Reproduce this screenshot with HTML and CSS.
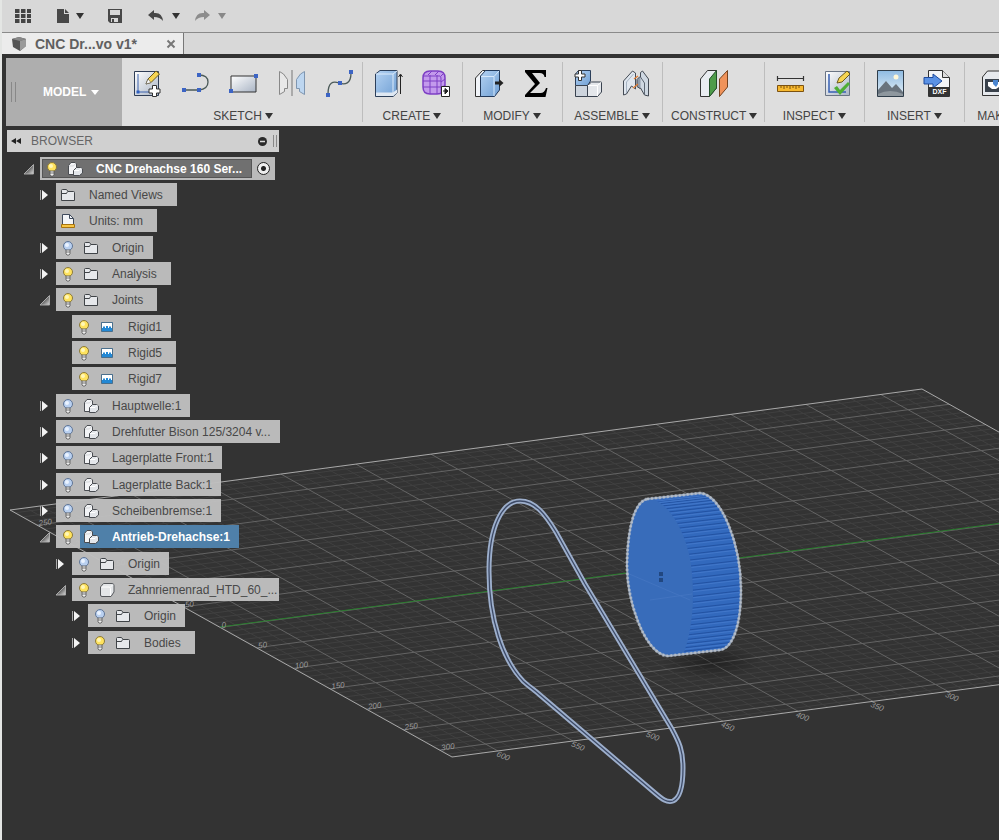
FILE: index.html
```html
<!DOCTYPE html>
<html lang="en">
<head>
<meta charset="utf-8">
<title>CNC Drehachse</title>
<link rel="stylesheet" href="styles.css">
</head>
<body>
<svg class="defs" aria-hidden="true">
  <defs>
    <linearGradient id="g-steel" x1="0" y1="0" x2="1" y2="1"><stop offset="0" stop-color="#fff"/><stop offset="1" stop-color="#a9b4c4"/></linearGradient>
    <linearGradient id="g-blue" x1="0" y1="0" x2="1" y2="1"><stop offset="0" stop-color="#b4d2f2"/><stop offset="1" stop-color="#6f9fd4"/></linearGradient>
    <linearGradient id="g-sky" x1="0" y1="0" x2="0" y2="1"><stop offset="0" stop-color="#8fbbe2"/><stop offset="1" stop-color="#e6f1f8"/></linearGradient>
    <linearGradient id="g-tri" x1="0" y1="0" x2="1" y2="1"><stop offset=".3" stop-color="#333"/><stop offset="1" stop-color="#ddd"/></linearGradient>
  </defs>
  <symbol id="bulb-on" viewBox="0 0 16 16"><circle cx="8" cy="6" r="4.500" fill="#ffe35e" stroke="#8c7a3a"/><circle cx="7" cy="5" r="2" fill="#fff7b8"/><path d="M6 10h4v4l-1 1H7l-1-1z" fill="#eee" stroke="#555" stroke-width=".8"/><path d="M6 12h4" stroke="#555" stroke-width=".8"/></symbol>
  <symbol id="bulb-off" viewBox="0 0 16 16"><circle cx="8" cy="6" r="4.500" fill="#b9d0f0" stroke="#5f7596"/><circle cx="7" cy="5" r="2" fill="#eaf3ff"/><path d="M6 10h4v4l-1 1H7l-1-1z" fill="#eee" stroke="#555" stroke-width=".8"/><path d="M6 12h4" stroke="#555" stroke-width=".8"/></symbol>
  <symbol id="folder" viewBox="0 0 16 16"><path d="M1.500 13.500V3.500q0-1 1-1h4l1.500 2h5.500q1 0 1 1v8z" fill="#e6e8eb" stroke="#3f4347"/><path d="M2 6.500h4.500l1-2" fill="none" stroke="#3f4347"/></symbol>
  <symbol id="component" viewBox="0 0 16 16"><path d="M1.500 13.500V4.500L4 1.500h4L9.500 3v10.500z" fill="#f3f4f6" stroke="#4a4d52"/><path d="M2 5h4.500L8.500 2.500" fill="none" stroke="#c4c7cb" stroke-width=".7"/><path d="M6.500 14.500V9.500L9.500 6.500h4L15.500 8v4L12.500 14.500z" fill="#e3e6ea" stroke="#4a4d52"/><path d="M7 9.500h5l2.500-2.500" fill="none" stroke="#fff"/></symbol>
  <symbol id="body" viewBox="0 0 16 16"><path d="M1.500 13V5L4.500 1.500H13q2 0 2 2V10l-3 4.500H3q-1.500 0-1.500-1.500z" fill="#e4e6e8" stroke="#55585c"/><path d="M2.500 5H10q1.500 0 1.500 1.500V14M11.500 5L14 2.500" fill="none" stroke="#fff"/></symbol>
  <symbol id="units" viewBox="0 0 16 16"><path d="M2.500 12V1.500h7l4 4V12z" fill="#f3f5f8" stroke="#3f4a5c"/><path d="M9.500 1.500v4h4" fill="none" stroke="#3f4a5c"/><path d="M1.500 11.500h13v3h-13z" fill="#f7c544" stroke="#a87410"/></symbol>
  <symbol id="rigid" viewBox="0 0 16 16"><path d="M2.500 3.500h11v9h-11z" fill="#2388d4" stroke="#4a6f8c"/><path d="M3 4h10v5h-1V7.500h-2V9H9V7H7v2H6V7.500H4V9H3z" fill="#fff"/></symbol>
  <symbol id="closed" viewBox="0 0 16 16"><path d="M4.500 3v10" stroke="#aaa" stroke-width="1"/><path d="M6 3l6 5-6 5z" fill="#f4f4f4"/></symbol>
  <symbol id="open" viewBox="0 0 16 16"><path d="M13.500 3.500v9.500H4z" fill="url(#g-tri)" stroke="#aaa"/></symbol>
</svg>

<header class="quick">
  <button aria-label="Data panel"><svg width="16" height="16" viewBox="0 0 16 16"><path fill="#444" d="M0 1h4.500v4H0zM6 1h4.500v4H6zM12 1h4v4h-4zM0 6h4.500v4H0zM6 6h4.500v4H6zM12 6h4v4h-4zM0 11h4.500v4H0zM6 11h4.500v4H6zM12 11h4v4h-4z"/></svg></button>
  <button class="with-arrow file" aria-label="File"><svg width="14" height="16" viewBox="0 0 14 16"><path fill="#484848" d="M1 1h7v5h5v9H1zM9 1l4 4H9z"/></svg><i class="down"></i></button>
  <button class="save" aria-label="Save"><svg width="16" height="16" viewBox="0 0 16 16"><path fill="#484848" fill-rule="evenodd" d="M1 1h14v14H3l-2-2zM3 2v5h10V2zM4 10v4h7v-4z"/><path fill="#484848" d="M5 11h2v3H5z"/></svg></button>
  <button class="with-arrow undo" aria-label="Undo"><svg width="16" height="12" viewBox="0 0 16 12"><path fill="#484848" d="M0 5l6-5v3q8-1 9 8-3-4-9-4v3z"/></svg><i class="down"></i></button>
  <button class="with-arrow redo" aria-label="Redo"><svg width="16" height="12" viewBox="0 0 16 12"><path fill="#8c8c8c" d="M16 5l-6-5v3Q2 2 1 11q3-4 9-4v3z"/></svg><i class="down"></i></button>
</header>

<nav class="tabs">
  <div class="tab">
    <svg width="16" height="14" viewBox="0 0 16 14"><path d="M1 2l7-2 7 2v7l-6 5-7-4z" fill="#555"/><path d="M1 2l7-2 7 2-6 2z" fill="#888"/><path d="M9 4l6-2v7l-6 5z" fill="#9a9a9a"/></svg>
    <span>CNC Dr...vo v1*</span>
    <button aria-label="Close tab"><svg width="10" height="10" viewBox="0 0 10 10"><path d="M1.500 1.500l7 7M8.500 1.500l-7 7" stroke="#777" stroke-width="2"/></svg></button>
  </div>
</nav>

<div class="ribbon">
  <button class="workspace"><span class="grip"></span><span>MODEL</span><i class="down"></i></button>

  <section class="group">
    <div class="tools">
      <button aria-label="Create sketch"><svg class="ico" viewBox="0 0 32 32"><path d="M3.500 3.500h24v24h-24z" fill="url(#g-steel)" stroke="#2f3d55"/><path d="M7 6v18h14" fill="none" stroke="#3d62ad"/><path d="M5.500 22.500h3v3h-3z" fill="#2f5fc0"/><path d="M15 16l2-5L25 3l3.500 3-8.500 8.500z" fill="#f6d451" stroke="#6b5a1e"/><path d="M15 16l2-5 3 3.500z" fill="#fff" stroke="#555" stroke-width=".6"/><path d="M21.500 17.500h4v3.500H29v4h-3.500v3.500h-4V25H18v-4h3.500z" fill="#fff" stroke="#333"/></svg></button>
      <button aria-label="Line"><svg class="ico" viewBox="0 0 32 32"><path d="M5 22h15q9-1 9-8t-9-7" fill="none" stroke="#4b5a58" stroke-width="1.300"/><path d="M3 20h4v4H3zM18 20h4v4h-4zM18 5h4v4h-4z" fill="#3c64c4"/></svg></button>
      <button aria-label="Rectangle"><svg class="ico" viewBox="0 0 32 32"><path d="M4 8h25v16H4z" fill="url(#g-steel)" stroke="#333"/><path d="M2 21h4v4H2zM27 6h4v4h-4z" fill="#3c64c4"/></svg></button>
      <button aria-label="Mirror"><svg class="ico" viewBox="0 0 32 32"><path d="M4.500 26.500v-23q4 1 8 8v9h-3v3z" fill="#e8e8e8" stroke="#888"/><path d="M17 2v26" stroke="#777"/><path d="M29.500 26.500v-23q-4 1-8 8v9h3v3z" fill="#bdd6f0" stroke="#7f96b0"/></svg></button>
      <button aria-label="Spline"><svg class="ico" viewBox="0 0 32 32"><path d="M5 26c0-12 5-13 11-11s12 1 12-10" fill="none" stroke="#4b5a58" stroke-width="1.300"/><path d="M3 25h4v4H3zM15 13h4v4h-4zM26 2h4v4h-4z" fill="#3c64c4"/></svg></button>
    </div>
    <button class="menu">SKETCH<i class="down"></i></button>
  </section>

  <section class="group">
    <div class="tools">
      <button aria-label="Extrude"><svg class="ico" viewBox="0 0 32 32"><path d="M3.500 6L8 2.500h17V25l-4 3.500H3.500z" fill="url(#g-blue)" stroke="#2c3f5a"/><path d="M4 6h17v22M21 6l4-3" fill="none" stroke="#dcebfb"/><path d="M4 24.500h17l4-3V25l-4 3H4z" fill="#dfe8f2"/><path d="M28.500 26V7M26.500 9l2-3 2 3" fill="none" stroke="#222"/></svg></button>
      <button aria-label="Create form"><svg class="ico" viewBox="0 0 32 32"><path d="M3 10q0-7 7-7h8q7 0 7 7v8q0 8-8 8h-7q-7 0-7-7z" fill="#c39aec" stroke="#7d3fc4" stroke-width="1.500"/><path d="M10 7v19M17 7v19M3 13h18M3 19h18M4 8h16q1 0 1 3v14M21 8l3-3M21 14l4-3M21 20l4-3M8 7l4-4M15 7l4-4" fill="none" stroke="#7d3fc4"/><path d="M21.500 18.500h8v10h-8z" fill="#fff" stroke="#222"/><path d="M23 23h4M25 20.500l3 2.500-3 3z" fill="#222" stroke="#222"/></svg></button>
    </div>
    <button class="menu">CREATE<i class="down"></i></button>
  </section>

  <section class="group">
    <div class="tools">
      <button aria-label="Press pull"><svg class="ico" viewBox="0 0 32 32"><path d="M3.500 10l7-7.500h5L9 10v18.500H3.500z" fill="#f1f4f8" stroke="#333"/><path d="M8.500 8l5-5.500h14V22l-5 6.500h-14z" fill="url(#g-blue)" stroke="#22395a"/><path d="M9 8.500h13V28M22 8.500L27 3" fill="none" stroke="#d6e8fb"/><path d="M23 13.500h4V11l4.500 4-4.500 4v-2.500h-4z" fill="#222"/></svg></button>
      <button aria-label="Change parameters"><svg class="ico" viewBox="0 0 32 32"><path d="M5 2h21v7h-1.500q-.5-4-5-4H12l8 10-10 10h10.500q4 0 5.500-5h1.500l-2 9H5v-2l10-11L5 4z" fill="#000"/></svg></button>
    </div>
    <button class="menu">MODIFY<i class="down"></i></button>
  </section>

  <section class="group">
    <div class="tools">
      <button aria-label="New component"><svg class="ico" viewBox="0 0 32 32"><path d="M3.500 6l3-3.500h12V13l-3 4.500h-12z" fill="url(#g-blue)" stroke="#2c3f5a"/><path d="M3.500 17.500h12v11h-12z" fill="#cdd4dd" stroke="#39424f"/><path d="M15.500 17.500l4-3.500h10v10l-4 4.500h-10z" fill="#e4e7eb" stroke="#39424f"/><path d="M16 17.500h9.500V28M25.500 17.500l4-3.500" fill="none" stroke="#fff"/><path d="M6.500 2.500h3v3.500H13v3H9.500v3.500h-3V9H3V6h3.500z" fill="#fff" stroke="#333"/></svg></button>
      <button aria-label="Joint"><svg class="ico" viewBox="0 0 32 32"><path d="M3.500 13l9-10 3 2v16l-4-3-5 8-3 1z" fill="#dfe6ee" stroke="#444b55"/><path d="M6.500 25V14l7-8" fill="none" stroke="#a6b3c2"/><path d="M17 11.500l3-3 3 2v8l-3 2-3-2z" fill="#8f9baa" stroke="#444b55"/><path d="M20.500 9V4.500l2-1.500 6 8v17l-4-1-4-7" fill="#cfd8e2" stroke="#444b55"/><path d="M24.500 27V15l-4-6" fill="none" stroke="#5d6773"/><path d="M13 20l5-4M14 11l4-3" stroke="#e07a30" stroke-width="1.200"/></svg></button>
    </div>
    <button class="menu">ASSEMBLE<i class="down"></i></button>
  </section>

  <section class="group solo">
    <div class="tools">
      <button aria-label="Offset plane"><svg class="ico" viewBox="0 0 32 32"><path d="M2.500 11l7-8.500h9V20l-7 8.500h-9z" fill="#e9edf1" stroke="#333"/><path d="M11.500 11l7-8.500V20l-7 8.500z" fill="#4e9c4a" stroke="#23502a"/><path d="M21.500 11l8-8.500V19l-8 9.500z" fill="#f0935a" stroke="#74421f"/></svg></button>
    </div>
    <button class="menu">CONSTRUCT<i class="down"></i></button>
  </section>

  <section class="group">
    <div class="tools">
      <button aria-label="Measure"><svg class="ico" viewBox="0 0 32 32"><path d="M3.500 8v5M29.500 8v5M4 10.500h25" stroke="#333" stroke-width="1.200"/><path d="M3.500 17.500h26v6h-26z" fill="#f7b92f" stroke="#7d5210"/><path d="M7 18v2M10 18v3M13 18v2M16 18v3M19 18v2M22 18v3M25 18v2" stroke="#7d5210"/></svg></button>
      <button aria-label="Analysis"><svg class="ico" viewBox="0 0 32 32"><path d="M3.500 3.500h24v24h-24z" fill="url(#g-steel)" stroke="#6a7484"/><path d="M7 6v18h17" fill="none" stroke="#3760b4" stroke-width="1.500"/><path d="M15 15l2-5 8-7 3 3-8 8z" fill="#f6d451" stroke="#6b5a1e"/><path d="M12 20l3-2 3 4 8-8 2 2-10 11z" fill="#4fae35"/></svg></button>
    </div>
    <button class="menu">INSPECT<i class="down"></i></button>
  </section>

  <section class="group">
    <div class="tools">
      <button aria-label="Attached canvas"><svg class="ico" viewBox="0 0 32 32"><path d="M3.500 2.500h26v26h-26z" fill="url(#g-sky)" stroke="#2f3d4a"/><circle cx="22" cy="9" r="2.500" fill="#fff8d8"/><path d="M4 22l8-9 6 7 4-4 7 8v4H4z" fill="#69737d"/><path d="M4 26q12-6 25 0v2H4z" fill="#8e979e"/></svg></button>
      <button aria-label="Insert DXF"><svg class="ico" viewBox="0 0 32 32"><path d="M6.500 2.500h14l7 7v19h-21z" fill="#f4f5f7" stroke="#333"/><path d="M20.500 2.500v7h7" fill="#ddd" stroke="#333"/><path d="M2 9.500h9V6l9 7-9 7v-4H2z" fill="#5b92e5" stroke="#1f4a9c"/><path d="M7 19h21v9H7z" fill="#333"/><text x="17.500" y="26" text-anchor="middle" class="dxf">DXF</text></svg></button>
    </div>
    <button class="menu">INSERT<i class="down"></i></button>
  </section>

  <section class="group make">
    <div class="tools">
      <button aria-label="3D print"><svg class="ico" viewBox="0 0 32 32"><path d="M8.500 27.500V9l5-6h18v24.500z" fill="#e6e9ed" stroke="#333"/><path d="M11 11h21v13H11z" fill="#3a424c"/><path d="M14 14h18v8h-4l-3-3-3 2h-4l-4-3z" fill="#fff"/><path d="M19 12h5v4l-2 3-3-3z" fill="#4b86d0"/></svg></button>
    </div>
    <button class="menu">MAKE<i class="down"></i></button>
  </section>
</div>

<main class="viewport">
  <svg class="scene" viewBox="2 126 997 714" preserveAspectRatio="xMinYMin slice" role="img" aria-label="Model view">
    <defs>
      <clipPath id="pulley-clip"><path d="M647 499L700 493C722 495 741 545 741 590C741 625 733 648 720 650L668 656C645 655 626 600 627 562C628 525 635 502 647 499Z"/></clipPath>
      <radialGradient id="shade"><stop offset="0" stop-color="#000" stop-opacity=".35"/><stop offset="1" stop-color="#000" stop-opacity="0"/></radialGradient>
    </defs>
    <path id="grid-minor" class="minor"/>
    <path id="grid-major" class="major"/>
    <path d="M10 510L922 389L1390 651M10 510L452 757L1390 633" class="border"/>
    <path d="M220 627L1100 510" class="axis"/>
    <g id="labels" class="labels"></g>
    <ellipse cx="712" cy="662" rx="50" ry="17" fill="url(#shade)"/>
    <g clip-path="url(#pulley-clip)">
      <path d="M620 485h130v180H620z" fill="#3269bd"/>
      <path id="teeth-dark" stroke="#2353a3"/>
      <path id="teeth-light" stroke="#4277c9"/>
      <path d="M645 498C668 498 684 530 690 558C697 600 691 636 682 658H660L620 620V490Z" fill="#386cba"/>
      <path d="M627 573L690 600M650 600L692 594" stroke="#4c7cc6" opacity=".5"/>
      <path d="M659 572h4v4h-4zM659 578h4v4h-4z" fill="#214780"/>
    </g>
    <path d="M647 499L700 493C722 495 741 545 741 590C741 625 733 648 720 650L668 656C645 655 626 600 627 562C628 525 635 502 647 499Z" class="rim"/>
    <path d="M647 499L700 493C722 495 741 545 741 590C741 625 733 648 720 650L668 656C645 655 626 600 627 562C628 525 635 502 647 499Z" class="rim-teeth"/>
    <g fill="none">
      <path d="M520 501C503 501 489 525 489 571C489 620 503 660 523 681C527 685 533 689 540 695L655 793C662 799 667 803 673 801C680 798 683 785 683 768C683 750 679 742 672 729L585 584L556 532C545 514 535 501 520 501Z" stroke="#9dafcc" stroke-width="5"/>
      <path d="M520 501C503 501 489 525 489 571C489 620 503 660 523 681C527 685 533 689 540 695L655 793C662 799 667 803 673 801C680 798 683 785 683 768C683 750 679 742 672 729L585 584L556 532C545 514 535 501 520 501Z" stroke="#3d4a66" stroke-width="1.300"/>
    </g>
  </svg>

  <aside class="browser">
    <div class="browser-head">
      <button aria-label="Collapse"><svg width="10" height="8" viewBox="0 0 10 8"><path d="M5 1v6L0 4zM10 1v6L5 4z" fill="#222"/></svg></button>
      <span>BROWSER</span>
      <button class="minus" aria-label="Minimize"><svg width="9" height="9" viewBox="0 0 9 9"><circle cx="4.500" cy="4.500" r="4.500" fill="#2b2b2b"/><path d="M2 4.500h5" stroke="#ddd" stroke-width="1.500"/></svg></button>
      <span class="grip small"></span>
    </div>
    <ul class="tree">
      <li class="l0"><button class="tog" aria-label="Collapse"><svg><use href="#open"/></svg></button><div class="bar root"><span class="inner"><svg><use href="#bulb-on"/></svg><svg><use href="#component"/></svg><b>CNC Drehachse 160 Ser...</b></span><input type="radio" checked aria-label="Activate component"></div></li>
      <li class="l1"><button class="tog" aria-label="Expand"><svg><use href="#closed"/></svg></button><div class="bar wide"><svg><use href="#folder"/></svg><span>Named Views</span></div></li>
      <li class="l1"><span class="tog"></span><div class="bar wide"><svg><use href="#units"/></svg><span>Units: mm</span></div></li>
      <li class="l1"><button class="tog" aria-label="Expand"><svg><use href="#closed"/></svg></button><div class="bar"><svg><use href="#bulb-off"/></svg><svg><use href="#folder"/></svg><span>Origin</span></div></li>
      <li class="l1"><button class="tog" aria-label="Expand"><svg><use href="#closed"/></svg></button><div class="bar wide"><svg><use href="#bulb-on"/></svg><svg><use href="#folder"/></svg><span>Analysis</span></div></li>
      <li class="l1"><button class="tog" aria-label="Collapse"><svg><use href="#open"/></svg></button><div class="bar wide"><svg><use href="#bulb-on"/></svg><svg><use href="#folder"/></svg><span>Joints</span></div></li>
      <li class="l2"><span class="tog"></span><div class="bar"><svg><use href="#bulb-on"/></svg><svg><use href="#rigid"/></svg><span>Rigid1</span></div></li>
      <li class="l2"><span class="tog"></span><div class="bar wide"><svg><use href="#bulb-on"/></svg><svg><use href="#rigid"/></svg><span>Rigid5</span></div></li>
      <li class="l2"><span class="tog"></span><div class="bar wide"><svg><use href="#bulb-on"/></svg><svg><use href="#rigid"/></svg><span>Rigid7</span></div></li>
      <li class="l1"><button class="tog" aria-label="Expand"><svg><use href="#closed"/></svg></button><div class="bar"><svg><use href="#bulb-off"/></svg><svg><use href="#component"/></svg><span>Hauptwelle:1</span></div></li>
      <li class="l1"><button class="tog" aria-label="Expand"><svg><use href="#closed"/></svg></button><div class="bar"><svg><use href="#bulb-off"/></svg><svg><use href="#component"/></svg><span>Drehfutter Bison 125/3204 v...</span></div></li>
      <li class="l1"><button class="tog" aria-label="Expand"><svg><use href="#closed"/></svg></button><div class="bar"><svg><use href="#bulb-off"/></svg><svg><use href="#component"/></svg><span>Lagerplatte Front:1</span></div></li>
      <li class="l1"><button class="tog" aria-label="Expand"><svg><use href="#closed"/></svg></button><div class="bar"><svg><use href="#bulb-off"/></svg><svg><use href="#component"/></svg><span>Lagerplatte Back:1</span></div></li>
      <li class="l1"><button class="tog" aria-label="Expand"><svg><use href="#closed"/></svg></button><div class="bar"><svg><use href="#bulb-off"/></svg><svg><use href="#component"/></svg><span>Scheibenbremse:1</span></div></li>
      <li class="l1"><button class="tog" aria-label="Collapse"><svg><use href="#open"/></svg></button><div class="bar picked"><svg><use href="#bulb-on"/></svg><span class="hit"><svg><use href="#component"/></svg><b>Antrieb-Drehachse:1</b></span></div></li>
      <li class="l2"><button class="tog" aria-label="Expand"><svg><use href="#closed"/></svg></button><div class="bar"><svg><use href="#bulb-off"/></svg><svg><use href="#folder"/></svg><span>Origin</span></div></li>
      <li class="l2"><button class="tog" aria-label="Collapse"><svg><use href="#open"/></svg></button><div class="bar tight"><svg><use href="#bulb-on"/></svg><svg><use href="#body"/></svg><span>Zahnriemenrad_HTD_60_...</span></div></li>
      <li class="l3"><button class="tog" aria-label="Expand"><svg><use href="#closed"/></svg></button><div class="bar"><svg><use href="#bulb-off"/></svg><svg><use href="#folder"/></svg><span>Origin</span></div></li>
      <li class="l3"><button class="tog" aria-label="Expand"><svg><use href="#closed"/></svg></button><div class="bar wide"><svg><use href="#bulb-on"/></svg><svg><use href="#folder"/></svg><span>Bodies</span></div></li>
    </ul>
  </aside>
</main>
<script src="scene.js"></script>
</body>
</html>
```

FILE: styles.css
```css
* { box-sizing: border-box; }
body {
  margin: 0;
  min-height: 100vh;
  display: flex;
  flex-direction: column;
  border-left: 2px solid #e4e6e4;
  background: #333;
  font: 12px/16px "Liberation Sans", Arial, sans-serif;
  color: #444;
  overflow-x: hidden;
}
button {
  display: flex;
  align-items: center;
  margin: 0;
  padding: 0;
  border: 0;
  background: none;
  font: inherit;
  color: inherit;
}
svg { display: block; flex: none; }
.defs { position: absolute; width: 0; height: 0; }
.down {
  border: 4px solid transparent;
  border-top: 6px solid currentColor;
  border-bottom: 0;
}

.quick {
  display: flex;
  align-items: center;
  height: 32px;
  padding-left: 13px;
  background: #d8d8d8;
  color: #333;
}
.with-arrow { gap: 6px; }
.file { margin-left: 25px; }
.save { margin-left: 23px; }
.undo, .redo { gap: 8px; }
.undo { margin-left: 25px; }
.redo { margin-left: 14px; color: #888; }

.tabs {
  display: flex;
  height: 22px;
  border-top: 1px solid #8a8a8a;
  background: #d8d8d8;
}
.tab {
  display: flex;
  align-items: center;
  width: 182px;
  padding: 0 7px 0 9px;
  background: #ececec;
  border-right: 1px solid #777;
  font-size: 14px;
  font-weight: bold;
  color: #606060;
}
.tab span { flex: 1; padding-left: 8px; }

.ribbon {
  display: flex;
  height: 72px;
  padding-left: 4px;
  border-top: 4px solid #333;
  background: #333;
  overflow: hidden;
}
.workspace {
  flex: none;
  width: 116px;
  gap: 5px;
  background: #aeaeae;
  color: #fff;
  font-weight: bold;
}
.grip {
  width: 5px;
  height: 20px;
  margin: 0 22px 0 5px;
  border: solid #888;
  border-width: 0 1px;
}
.workspace .down { border-width: 5px 4px 0; }
.group {
  flex: none;
  display: flex;
  flex-direction: column;
  align-items: center;
  justify-content: space-between;
  padding: 10px 2px 2px;
  background: linear-gradient(#bdbdbd, #bdbdbd) right 4px / 1px 60px no-repeat #dedede;
}
.tools { display: flex; }
.tools button { width: 48px; justify-content: center; }
.workspace + .group { padding-left: 1px; padding-right: 0; }
.group + .group { padding-left: 1px; padding-right: 3px; }
.group.solo { padding-left: 8px; padding-right: 8px; }
.group.make { flex: 1 0 100px; align-items: flex-start; }
.make .menu { padding-left: 11px; }
.ico { width: 32px; height: 32px; }
.menu { gap: 3px; color: #444; }
.menu .down { border-top-color: #333; }
.dxf { font: bold 7px "Liberation Sans", sans-serif; fill: #fff; }

.viewport {
  position: relative;
  flex: 1;
  padding: 4px 0 0 5px;
  background: #333;
}
.scene {
  position: absolute;
  inset: 0;
  width: 100%;
  height: 100%;
}
.minor { fill: none; stroke: #404040; stroke-width: 1; }
.major { fill: none; stroke: #646464; stroke-width: 1; }
.border { fill: none; stroke: #a9a9a9; stroke-width: 1; }
.axis { stroke: #2a7d2e; stroke-width: 1; }
.labels { font: italic 8px "Liberation Sans", sans-serif; fill: #9b9b9b; }
.rim { fill: none; stroke: #9ba9bd; stroke-width: 2; }
.rim-teeth { fill: none; stroke: #c6cbd0; stroke-width: 3; stroke-dasharray: 2 2; stroke-opacity: 0.6; }

.browser { position: relative; width: 272px; }
.browser-head {
  display: flex;
  align-items: center;
  height: 22px;
  padding: 0 2px 0 4px;
  background: #d0d0d0;
  color: #666;
}
.browser-head > span:nth-child(2) { flex: 1; padding-left: 10px; }
.grip.small { width: 4px; height: 12px; margin: 0 0 0 6px; }

.tree { margin: 5px 0 0; padding: 0; list-style: none; }
.tree li { display: flex; margin-bottom: 3px; }
.tree li:nth-child(3n) { margin-bottom: 4px; }
.tree svg { width: 16px; height: 16px; }
.l0 { padding-left: 13px; }
.l1 { padding-left: 29px; }
.l2 { padding-left: 45px; }
.l3 { padding-left: 61px; }
.tog { flex: none; width: 20px; }
.bar {
  flex: none;
  display: flex;
  align-items: center;
  height: 23px;
  padding: 0 9px 0 4px;
  background: rgba(192, 192, 192, 0.96);
  white-space: nowrap;
  color: #484848;
}
.bar > svg + svg { margin-left: 7px; }
.bar > span { padding-left: 13px; }
.bar.wide { padding-right: 14px; }
.bar.tight { padding-right: 2px; }
.bar b { color: #fff; padding-left: 13px; }
.bar.root { padding: 2px 5px 2px 2px; width: 235px; justify-content: space-between; }
.root .inner {
  flex: 1;
  display: flex;
  align-items: center;
  height: 19px;
  margin-right: 5px;
  padding-left: 1px;
  border: 1px solid #555;
  background: #707070;
}
.root .inner svg + svg { margin-left: 7px; }
.root input {
  appearance: none;
  width: 13px;
  height: 13px;
  margin: 0;
  border: 1px solid #222;
  border-radius: 50%;
  background: radial-gradient(circle, #222 0 2px, #eee 3px);
}
.bar.picked { padding-right: 0; }
.picked .hit {
  display: flex;
  align-items: center;
  height: 23px;
  margin-left: 4px;
  padding: 0 9px 0 3px;
  background: #4f80a9;
}
```

FILE: scene.js
```js
// Ground grid: origin at the left corner, one axis to the right, one towards the viewer.
const origin = [10, 510];
const slopeU = -0.1325;
const slopeV = 0.559;
const depth = 442;
const reach = 912;
const stepU = 75;
const stepV = 36.6;
const at = (u, v) => `${(origin[0] + u + v).toFixed(1)} ${(origin[1] + u * slopeU + v * slopeV).toFixed(1)}`;

let major = "";
let minor = "";
for (let i = -3; ; i++) {
  const u = 46 + (i * stepU) / 5;
  if (u > reach) break;
  const seg = `M${at(u, 0)}L${at(u, depth)}`;
  if (i % 5 === 0) major += seg; else minor += seg;
}
for (let i = -3; ; i++) {
  const v = 27 + (i * stepV) / 5;
  if (v > depth) break;
  const seg = `M${at(0, v)}L${at(reach, v)}`;
  if (i % 5 === 0) major += seg; else minor += seg;
}
document.getElementById("grid-major").setAttribute("d", major);
document.getElementById("grid-minor").setAttribute("d", minor);

// Scale numbers along the two visible edges.
const labels = document.getElementById("labels");
function label(text, x, y, angle) {
  const node = document.createElementNS("http://www.w3.org/2000/svg", "text");
  node.setAttribute("transform", `translate(${x} ${y}) rotate(${angle})`);
  node.textContent = text;
  labels.append(node);
}
for (let i = 0; i < 7; i++) {
  label(String(600 - i * 50), 496 + i * 74.8, 756 - i * 9.9, 22);
}
for (let i = -5; i < 7; i++) {
  label(String(Math.abs(i) * 50), 222 + i * stepV, 628 + i * 20.4, -8);
}

// Pulley teeth, packed closer towards the top and bottom of the rim.
let dark = "";
let light = "";
for (let i = 0; i <= 44; i++) {
  const y = 578 - 86 * Math.cos((Math.PI * i) / 44);
  dark += `M640 ${(y + 6).toFixed(1)}L745 ${(y - 6).toFixed(1)}`;
  light += `M640 ${(y + 7.5).toFixed(1)}L745 ${(y - 4.5).toFixed(1)}`;
}
document.getElementById("teeth-dark").setAttribute("d", dark);
document.getElementById("teeth-light").setAttribute("d", light);
```
